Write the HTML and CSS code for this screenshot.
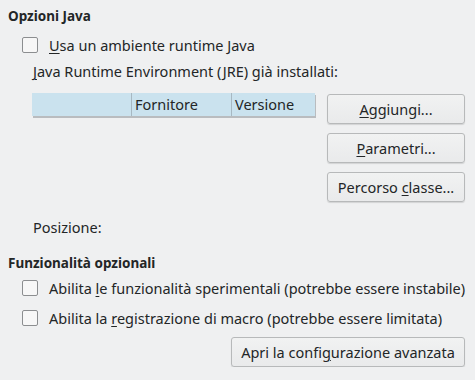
FILE: index.html
```html
<!DOCTYPE html>
<html lang="it">
<head>
    <meta charset="UTF-8">
    <title>Opzioni Java</title>
    <link rel="stylesheet" href="styles.css">
</head>
<body>
    <div class="page">
        <h2 class="section-title">Opzioni Java</h2>
        <label class="check-row first">
            <span class="box"></span>
            <span><u>U</u>sa un ambiente runtime Java</span>
        </label>
        <div class="sub-label"><u>J</u>ava Runtime Environment (JRE) già installati:</div>
        <div class="jre-area">
            <div class="jre-table">
                <div class="jre-head">
                    <div class="col col-1"></div>
                    <div class="col col-2">Fornitore</div>
                    <div class="col col-3">Versione</div>
                </div>
            </div>
            <div class="buttons">
                <button><u>A</u>ggiungi...</button>
                <button><u>P</u>arametri...</button>
                <button>Percorso <u>c</u>lasse...</button>
            </div>
        </div>
        <div class="position">Posizione:</div>

        <h2 class="section-title second">Funzionalità opzionali</h2>
        <label class="check-row">
            <span class="box"></span>
            <span>Abilita <u>l</u>e funzionalità sperimentali (potrebbe essere instabile)</span>
        </label>
        <label class="check-row">
            <span class="box"></span>
            <span>Abilita la <u>r</u>egistrazione di macro (potrebbe essere limitata)</span>
        </label>
        <div class="footer">
            <button class="wide">Apri la confi<u>g</u>urazione avanzata</button>
        </div>
    </div>
</body>
</html>
```

FILE: styles.css
```css
body {
    margin: 0;
    background-color: #eff0f1;
    font-family: "Noto Sans", sans-serif;
    font-size: 14.5px;
    color: #232627;
}
.page {
    padding: 6px 10px 0 8px;
}
.section-title {
    margin: 0;
    font-size: 13.5px;
    font-weight: bold;
    line-height: 20px;
}
.section-title.second {
    margin-top: 17px;
}
.check-row {
    display: flex;
    align-items: center;
    gap: 11px;
    margin-left: 14px;
    height: 30px;
    line-height: 18px;
    white-space: nowrap;
    margin-right: -10px;
}
.check-row.first {
    margin-top: 4px;
}
.box {
    width: 14px;
    height: 14px;
    border: 1px solid #8c8e90;
    border-radius: 2px;
    background: #f7f7f7;
    flex: none;
}
u {
    text-decoration-thickness: 1px;
    text-underline-offset: 2px;
}
.sub-label {
    margin-left: 25px;
    line-height: 18px;
    margin-top: 2px;
}
.jre-area {
    display: flex;
    justify-content: space-between;
    margin-left: 24px;
    margin-top: 13px;
}
.jre-table {
    width: 283px;
}
.jre-head {
    display: flex;
    height: 23px;
    background: #cae2ee;
    box-shadow: 1px 2px 0 #b9bcbf;
}
.col {
    line-height: 22px;
    padding-left: 3px;
    box-sizing: border-box;
}
.col-1 { width: 99px; }
.col-2 { width: 100px; border-left: 1px solid #a7b8c2; }
.col-3 { flex: 1; border-left: 1px solid #a7b8c2; }
.buttons {
    display: flex;
    flex-direction: column;
    gap: 9px;
    margin-top: 1px;
}
button {
    font-family: "Noto Sans", sans-serif;
    font-size: 14.5px;
    color: #232627;
    height: 30px;
    width: 138px;
    background: linear-gradient(#f1f2f2, #e9eaeb);
    border: 1px solid #b7b9ba;
    border-radius: 3px;
    box-shadow: 0 1px 1px rgba(0, 0, 0, 0.12);
    padding: 0;
}
.position {
    margin-left: 25px;
    margin-top: 16px;
    line-height: 18px;
}
.footer {
    display: flex;
    justify-content: flex-end;
    margin-top: 4px;
}
button.wide {
    width: 234px;
}
```
